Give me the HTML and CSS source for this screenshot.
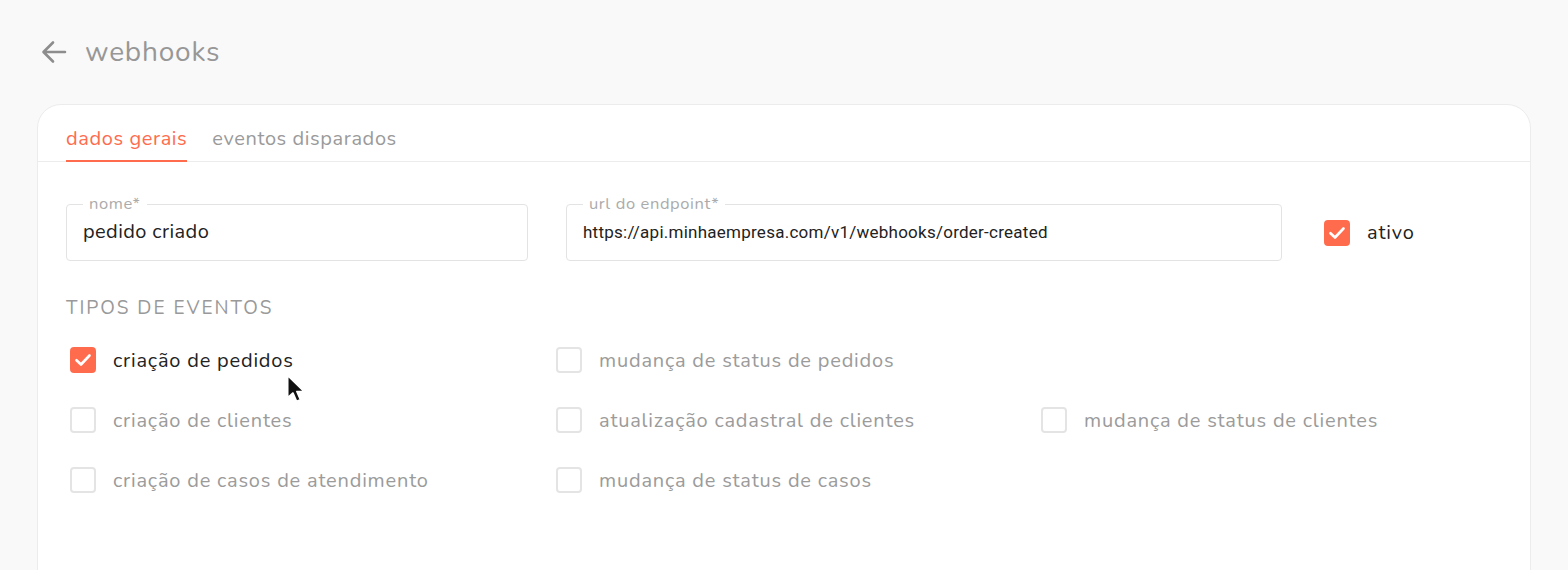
FILE: index.html
```html
<!DOCTYPE html>
<html lang="pt-BR">
<head>
<meta charset="utf-8">
<title>webhooks</title>
<link rel="stylesheet" href="styles.css">
</head>
<body>
<div class="page">
  <header class="header">
    <svg class="back" width="26" height="24" viewBox="0 0 26 24"><path d="M24 12H3M12 2.5L2.5 12L12 21.5" fill="none" stroke="#8d8d8d" stroke-width="2.6" stroke-linecap="round" stroke-linejoin="round"/></svg>
    <h1 class="title">webhooks</h1>
  </header>
  <main class="card">
    <nav class="tabs">
      <div class="tab active">dados gerais</div>
      <div class="tab">eventos disparados</div>
    </nav>
    <section class="body">
      <div class="form-row">
        <div class="field name">
          <span class="field-label">nome*</span>
          <span class="field-value">pedido criado</span>
        </div>
        <div class="field url">
          <span class="field-label">url do endpoint*</span>
          <span class="field-value mono">https://api.minhaempresa.com/v1/webhooks/order-created</span>
        </div>
        <label class="check active-check">
          <span class="box checked"><svg width="18" height="14" viewBox="0 0 18 14"><path d="M2.5 7.2L7 11.5L15.5 2.5" fill="none" stroke="#fff" stroke-width="2.6" stroke-linecap="round" stroke-linejoin="round"/></svg></span>
          <span class="check-text dark">ativo</span>
        </label>
      </div>
      <div class="section-title">TIPOS DE EVENTOS</div>
      <div class="events">
        <label class="check event">
          <span class="box checked"><svg width="18" height="14" viewBox="0 0 18 14"><path d="M2.5 7.2L7 11.5L15.5 2.5" fill="none" stroke="#fff" stroke-width="2.6" stroke-linecap="round" stroke-linejoin="round"/></svg></span>
          <span class="check-text dark">criação de pedidos</span>
          <svg class="cursor" width="22" height="30" viewBox="0 0 19 26"><path d="M1.5 1.5V20.5L6 16.4L9.2 23.6L12.4 22.3L9.3 15.2L15.3 15Z" fill="#111" stroke="#fff" stroke-width="1.3" stroke-linejoin="round"/></svg>
        </label>
        <label class="check event">
          <span class="box"></span>
          <span class="check-text">mudança de status de pedidos</span>
        </label>
        <div class="event-empty"></div>
        <label class="check event">
          <span class="box"></span>
          <span class="check-text">criação de clientes</span>
        </label>
        <label class="check event">
          <span class="box"></span>
          <span class="check-text">atualização cadastral de clientes</span>
        </label>
        <label class="check event">
          <span class="box"></span>
          <span class="check-text">mudança de status de clientes</span>
        </label>
        <label class="check event">
          <span class="box"></span>
          <span class="check-text">criação de casos de atendimento</span>
        </label>
        <label class="check event">
          <span class="box"></span>
          <span class="check-text">mudança de status de casos</span>
        </label>
      </div>
    </section>
  </main>
</div>
</body>
</html>
```

FILE: styles.css
```css
html, body {
  margin: 0;
  padding: 0;
  overflow: hidden;
}
body {
  background: #f9f9f9;
  font-family: "Nunito", "Lato", "Noto Sans", sans-serif;
  color: #222;
}
.page {
  padding: 0 37px;
}
.header {
  display: flex;
  align-items: center;
  height: 104px;
  padding-left: 4px;
  box-sizing: border-box;
}
.back {
  margin-right: 18px;
}
.title {
  margin: 0;
  font-size: 28px;
  font-weight: 400;
  color: #979797;
  letter-spacing: 0.8px;
}
.card {
  background: #fff;
  border: 1px solid #ececec;
  border-radius: 24px;
  height: 520px;
  box-sizing: border-box;
}
.tabs {
  display: flex;
  gap: 25px;
  padding: 0 28px;
  height: 56px;
  border-bottom: 1px solid #ececec;
}
.tab {
  display: flex;
  align-items: center;
  font-size: 20px;
  letter-spacing: 0.6px;
  color: #9a9a9a;
  padding-top: 11px;
  box-sizing: border-box;
  border-bottom: 2px solid transparent;
  margin-bottom: -1px;
}
.tab.active {
  color: #ff6c4d;
  border-bottom-color: #ff6c4d;
}
.body {
  padding: 42px 28px 0;
}
.form-row {
  display: flex;
  align-items: center;
  gap: 38px;
}
.field {
  position: relative;
  height: 57px;
  border: 1.5px solid #e3e3e3;
  border-radius: 4px;
  box-sizing: border-box;
  display: flex;
  align-items: center;
  padding-left: 16px;
}
.field.name { width: 462px; }
.field.url { width: 716px; }
.field-label {
  position: absolute;
  left: 16px;
  top: -11px;
  padding: 0 6px;
  background: #fff;
  font-size: 16.5px;
  letter-spacing: 0.6px;
  line-height: 20px;
  color: #ababab;
}
.field-value {
  font-size: 20px;
  letter-spacing: 0.4px;
  color: #222;
  padding-bottom: 2px;
}
.field-value.mono {
  font-family: "Roboto", "Liberation Sans", sans-serif;
  font-size: 17px;
  letter-spacing: 0.25px;
}
.check {
  display: flex;
  align-items: center;
  gap: 17px;
  position: relative;
}
.active-check {
  margin-left: 4px;
}
.box {
  width: 26px;
  height: 26px;
  box-sizing: border-box;
  border: 2.5px solid #e4e4e4;
  border-radius: 4px;
  display: flex;
  align-items: center;
  justify-content: center;
  flex: none;
}
.box.checked {
  background: #ff6c4d;
  border-color: #ff6c4d;
}
.check-text {
  font-size: 20px;
  letter-spacing: 0.8px;
  color: #9b9b9b;
}
.check-text.dark {
  color: #222;
}
.section-title {
  margin-top: 35px;
  font-size: 19px;
  letter-spacing: 2px;
  color: #999;
  line-height: 24px;
}
.events {
  display: grid;
  grid-template-columns: 486px 485px 1fr;
  grid-auto-rows: 60px;
  margin-top: 10px;
  padding-left: 4px;
}
.event {
  height: 60px;
}
.cursor {
  position: absolute;
  left: 216px;
  top: 44px;
}
```
